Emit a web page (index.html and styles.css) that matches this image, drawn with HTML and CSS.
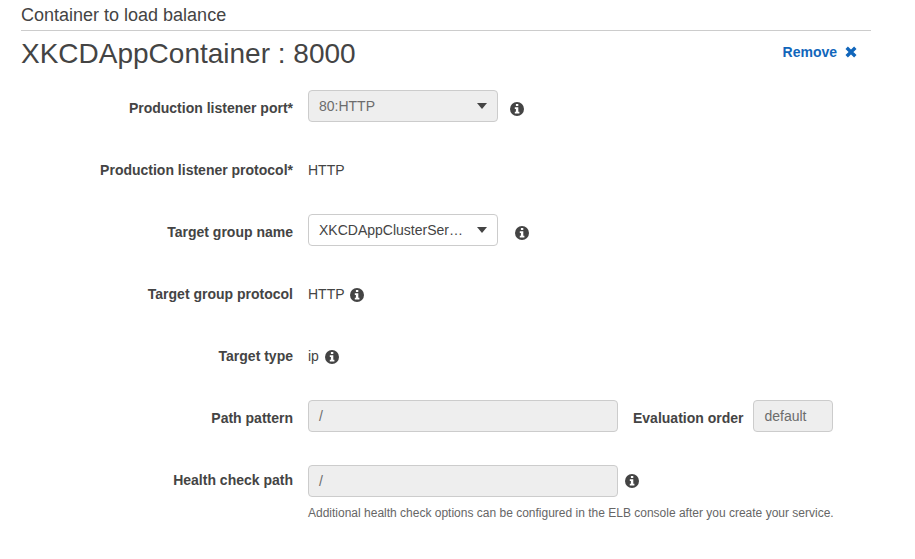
FILE: index.html
```html
<!DOCTYPE html>
<html lang="en">
<head>
<meta charset="utf-8">
<title>Container to load balance</title>
<link rel="stylesheet" href="styles.css">
</head>
<body>
<svg width="0" height="0" class="defs"><symbol id="info" viewBox="0 0 14 14"><circle cx="7" cy="7" r="7"/><path d="M5.900 2h2.400v2H5.900zM4.800 5.200h3.500v4.600H9.400v1.700H4.800V9.800H5.900V6.900H4.800z" fill="#fff"/></symbol></svg>
<main class="panel">
<h2 class="section">Container to load balance</h2>
<header class="head"><h1>XKCDAppContainer : 8000</h1><a class="remove">Remove <svg viewBox="0 0 12 12"><path d="M1.700 1.700l8.600 8.600M10.300 1.700l-8.600 8.600"/></svg></a></header>
<div class="row"><label>Production listener port*</label><div class="field select disabled">80:HTTP<i></i></div><svg class="info gap12"><use href="#info"/></svg></div>
<div class="row"><label>Production listener protocol*</label><span class="value">HTTP</span></div>
<div class="row"><label>Target group name</label><div class="field select">XKCDAppClusterSer…<i></i></div><svg class="info gap17"><use href="#info"/></svg></div>
<div class="row"><label>Target group protocol</label><span class="value">HTTP</span><svg class="info inline"><use href="#info"/></svg></div>
<div class="row"><label>Target type</label><span class="value">ip</span><svg class="info inline-wide"><use href="#info"/></svg></div>
<div class="row"><label>Path pattern</label><div class="field wide disabled">/</div><b class="order">Evaluation order</b><div class="field small disabled">default</div></div>
<div class="row health"><label>Health check path</label><div class="field wide disabled">/</div><svg class="info gap7"><use href="#info"/></svg></div>
<p class="hint">Additional health check options can be configured in the ELB console after you create your service.</p>
</main>
</body>
</html>
```
FILE: styles.css
```css
* { box-sizing: border-box; }
body { margin: 0; background: #fff; color: #444; font: 14px/20px "Liberation Sans", Arial, sans-serif; }
.defs { position: absolute; }
.panel { width: 850px; margin-left: 21px; }
.section { height: 31px; margin: 0; padding-top: 3px; border-bottom: 1px solid #ccc; font-size: 18px; line-height: 24px; font-weight: 400; }
.head { display: flex; justify-content: space-between; height: 59px; }
h1 { margin: 5px 0 0; font-size: 28px; line-height: 36px; font-weight: 400; }
.remove { display: flex; height: 20px; margin: 11px 14px 0 0; color: #1166bb; font-weight: 700; }
.remove svg { width: 12px; height: 12px; margin: 3.5px 0 0 8px; stroke: currentColor; stroke-width: 3.4; }
.row { display: flex; height: 62px; }
label { width: 272px; margin: 8px 15px 0 0; text-align: right; font-weight: 700; }
.value { margin-top: 8px; }
.field { width: 190px; height: 32px; padding: 5px 10px; border: 1px solid #ccc; border-radius: 4px; white-space: nowrap; }
.select { display: flex; justify-content: space-between; padding-right: 10px; }
.select i { width: 0; height: 0; margin-top: 7px; border: 5px solid transparent; border-top: 6px solid #444; border-bottom: 0; }
.disabled { background: #eee; color: #6c6c6c; }
.wide { width: 310px; }
.small { width: 80px; }
.order { margin: 8px 10px 0 15px; }
.info { width: 14px; height: 14px; margin-top: 12px; fill: #444; }
.gap12 { margin-left: 12px; }
.gap17 { margin-left: 17px; }
.gap7 { margin-left: 7px; }
.inline { margin-left: 5.5px; }
.inline-wide { margin-left: 6px; }
.health { height: 41px; }
.health .field { margin-top: 3px; }
.hint { margin: 0 0 0 287px; font-size: 12px; line-height: 20px; color: #666; white-space: nowrap; }
```
